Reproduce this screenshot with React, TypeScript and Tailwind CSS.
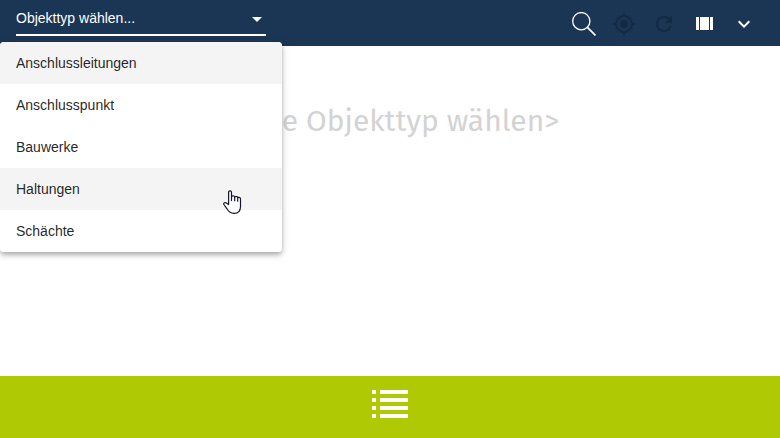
import { useState } from 'react';
import { MdExpandMore, MdRefresh } from 'react-icons/md';

const objectTypes = ['Anschlussleitungen', 'Anschlusspunkt', 'Bauwerke', 'Haltungen', 'Schächte'];

function SearchIcon() {
  return (
    <svg className="size-6" viewBox="0 0 24 24" fill="none" stroke="currentColor" strokeWidth="1.3">
      <circle cx="9.3" cy="9.2" r="8.6" />
      <path d="M15.4 15.3 L23.5 23.4" strokeWidth="1.7" />
    </svg>
  );
}

function TargetIcon() {
  return (
    <svg className="size-6" viewBox="0 0 24 24" fill="none" stroke="currentColor" strokeWidth="2">
      <circle cx="12" cy="12" r="8.2" />
      <circle cx="12" cy="12" r="4" fill="currentColor" stroke="none" />
      <path d="M12 0.5v3M12 20.5v3M0.5 12h3M20.5 12h3" />
    </svg>
  );
}

function ColumnsIcon() {
  return (
    <svg className="size-6" viewBox="0 0 24 24" fill="currentColor" shapeRendering="crispEdges">
      <path d="M4 18h3V5H4zM18 5v13h3V5zM8 18h9V5H8z" />
    </svg>
  );
}

function ListIcon() {
  return (
    <svg className="h-7 w-9" viewBox="0 0 36 28" fill="currentColor" shapeRendering="crispEdges">
      {[0, 8, 16, 24].map((y) => (
        <g key={y}>
          <rect x="0" y={y} width="4" height="4" />
          <rect x="8" y={y} width="28" height="4" />
        </g>
      ))}
    </svg>
  );
}

function HandPointer() {
  return (
    <svg
      className="pointer-events-none absolute top-[190px] left-[223px] z-20"
      width="19"
      height="25"
      viewBox="0 0 19 25"
      fill="white"
      stroke="#14142b"
      strokeWidth="1.2"
      strokeLinejoin="round"
      strokeLinecap="round"
    >
      <path d="M5.6 14.6 V2.4 C5.6 .3 8.5 .3 8.5 2.4 V6.2 C10.5 5.6 11.6 6 11.7 6.7 C13.3 6.2 14.5 6.6 14.7 7.4 C16.3 7 17.5 7.6 17.5 9.2 V16.5 C17.5 20.7 15 23.4 11 23.4 C7.3 23.4 5.4 21.3 4 18.8 L.9 14.5 C.1 12.8 2.2 12 3.4 13 Z" />
      <path d="M8.5 6.2 V10.6 M11.7 6.7 V10.8 M14.7 7.4 V11.2" fill="none" />
    </svg>
  );
}

export default function App() {
  const [open, setOpen] = useState(true);
  const [selected, setSelected] = useState('');
  const [active, setActive] = useState('Haltungen');

  const choose = (type: string) => {
    setSelected(type);
    setOpen(false);
  };

  return (
    <div className="relative flex min-h-screen flex-col bg-white font-['Liberation_Sans',Arial,sans-serif]">
      <header className="flex h-[46px] items-start justify-between bg-[#1b3654] pr-6 pl-4 text-white">
        <div className="relative w-[250px] border-b-2 border-white">
          <select
            aria-label="Objekttyp"
            value={selected}
            onChange={(e) => setSelected(e.target.value)}
            onMouseDown={(e) => {
              e.preventDefault();
              setOpen(!open);
            }}
            className="block h-[34px] w-full appearance-none bg-transparent pt-0.5 text-sm outline-none"
          >
            <option value="">Objekttyp wählen...</option>
            {objectTypes.map((type) => (
              <option key={type} value={type}>{type}</option>
            ))}
          </select>
          <svg className="pointer-events-none absolute top-[17px] right-1" width="10" height="5" viewBox="0 0 10 5" fill="currentColor">
            <path d="M0 0h10L5 5z" />
          </svg>

          {/* Auswahlliste */}
          {open && (
            <div
              role="listbox"
              aria-label="Objekttyp"
              className="absolute top-[42px] -left-4 z-10 w-[282px] overflow-hidden rounded bg-white shadow-[0_2px_4px_-1px_rgba(0,0,0,0.2),0_4px_5px_0_rgba(0,0,0,0.14),0_1px_10px_0_rgba(0,0,0,0.12)]"
            >
              {objectTypes.map((type, i) => (
                <button
                  key={type}
                  type="button"
                  role="option"
                  aria-selected={selected === type}
                  onClick={() => choose(type)}
                  onMouseEnter={() => setActive(type)}
                  className={`block h-[42px] w-full px-4 text-left text-sm text-black/87 ${i === 0 || type === active ? 'bg-[#f4f4f4]' : 'bg-white'}`}
                >
                  {type}
                </button>
              ))}
            </div>
          )}
        </div>

        <div className="flex gap-4 pt-3">
          <button type="button" aria-label="Suchen"><SearchIcon /></button>
          <button type="button" aria-label="Zentrieren" disabled className="text-[#132a41]"><TargetIcon /></button>
          <button type="button" aria-label="Aktualisieren" disabled className="text-[#132a41]"><MdRefresh size={24} /></button>
          <button type="button" aria-label="Ansicht"><ColumnsIcon /></button>
          <button type="button" aria-label="Mehr"><MdExpandMore size={24} /></button>
        </div>
      </header>

      <main className="flex-1 pt-14 pr-0.5 text-center">
        <h1 className="font-['Fira_Sans','Noto_Sans',sans-serif] text-[30px] leading-[38px] text-[#d3d3d3]">&lt;Bitte Objekttyp wählen&gt;</h1>
      </main>

      <footer className="flex h-[62px] justify-center bg-[#afca05] pt-[14px] text-white">
        <button type="button" aria-label="Liste" className="self-start"><ListIcon /></button>
      </footer>

      {open && <HandPointer />}
    </div>
  );
}
